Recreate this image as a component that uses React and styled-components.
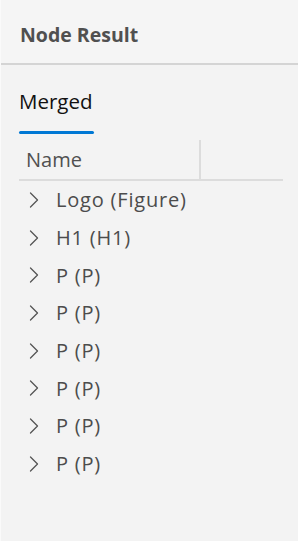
import React from 'react'
import styled, {createGlobalStyle} from 'styled-components'

const GlobalStyle = createGlobalStyle`
html, body{
    margin: 0;
    padding: 0;
    background: #f3f3f3;
}
body{
    font-family: "Open Sans", "Noto Sans", sans-serif;
}
`

const rows = ['Logo (Figure)', 'H1 (H1)', 'P (P)', 'P (P)', 'P (P)', 'P (P)', 'P (P)', 'P (P)']

const Chevron = () => (
    <svg width="10" height="16" viewBox="0 0 10 16" fill="none">
        <path d="M1.5 1 L8.5 8 L1.5 15" stroke="#555" strokeWidth="1.3" strokeLinecap="round" strokeLinejoin="round"/>
    </svg>
)

const App = () => {
    return(
        <>
        <GlobalStyle/>
        <Panel>
            <Header>
                <Title>Node Result</Title>
            </Header>
            <Body>
                <Tabs>
                    <Tab active>Merged</Tab>
                </Tabs>
                <Table>
                    <HeadRow>
                        <HeadCell>Name</HeadCell>
                        <HeadCell/>
                    </HeadRow>
                    {rows.map((name, i) => (
                        <Row key={i}>
                            <Chevron/>
                            <RowText>{name}</RowText>
                        </Row>
                    ))}
                </Table>
            </Body>
        </Panel>
        </>
    )
}

const Panel = styled.div`
width: 298px;
height: 541px;
box-sizing: border-box;
border-left: 1px solid #fafafa;
background: #f3f3f3;
display: flex;
flex-direction: column;
`

const Header = styled.div`
height: 65px;
box-sizing: border-box;
padding: 5px 19px 0;
display: flex;
align-items: center;
background: #f5f5f5;
border-bottom: 2px solid #d4d4d4;
`

const Title = styled.h2`
margin: 0;
font-size: 19.5px;
font-weight: 700;
color: #505050;
`

const Body = styled.div`
padding: 0 15px 0 18px;
`

const Tabs = styled.div`
display: flex;
padding-top: 22px;
`

const Tab = styled.div`
font-size: 20.5px;
line-height: 28px;
color: ${props => props.active ? '#111' : '#555'};
padding: 0 0 19px;
position: relative;
&::after{
    content: '';
    position: absolute;
    left: 0;
    right: -1px;
    bottom: 0;
    height: 3px;
    border-radius: 2px;
    background: ${props => props.active ? '#0078d4' : 'transparent'};
}
`

const Table = styled.div`
margin-top: 6px;
`

const HeadRow = styled.div`
display: grid;
grid-template-columns: 180px 1fr;
height: 39px;
border-bottom: 2px solid #dcdcdc;
`

const HeadCell = styled.div`
display: flex;
align-items: center;
padding-left: 7px;
font-size: 20px;
color: #505050;
& + &{
    border-left: 2px solid #dcdcdc;
}
`

const Row = styled.div`
display: flex;
align-items: center;
height: 37.7px;
padding-left: 10px;
gap: 17px;
`

const RowText = styled.span`
font-size: 20px;
letter-spacing: 0.8px;
color: #4c4c4c;
`

export default App
